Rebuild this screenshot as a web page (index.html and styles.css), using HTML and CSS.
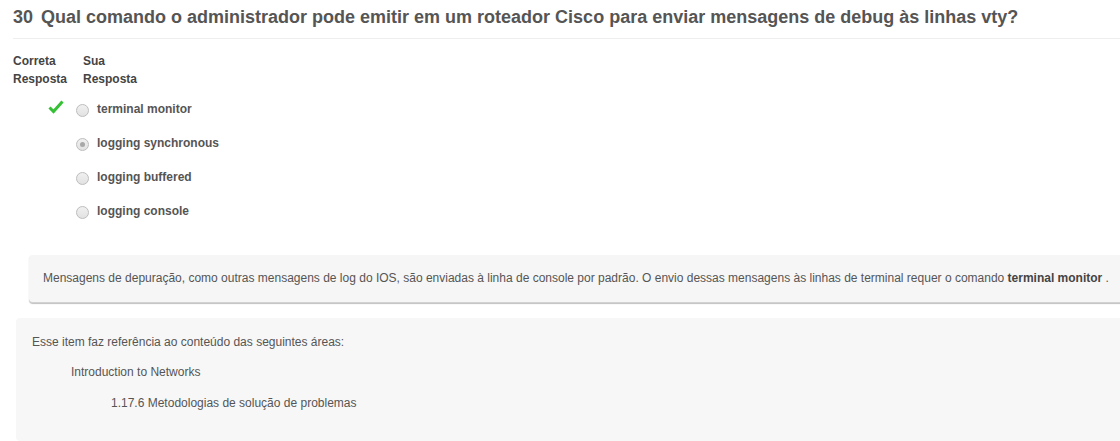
FILE: index.html
```html
<!DOCTYPE html>
<html lang="pt">
<head>
<meta charset="utf-8">
<link rel="stylesheet" href="styles.css">
</head>
<body>
<div class="page">
  <h2 class="question"><span class="qnum">30</span>Qual comando o administrador pode emitir em um roteador Cisco para enviar mensagens de debug às linhas vty?</h2>
  <div class="answers">
    <div class="heads">
      <div class="head h1">Correta<br>Resposta</div>
      <div class="head h2">Sua<br>Resposta</div>
    </div>
    <ul class="options">
      <li class="opt"><span class="mark"><svg width="16" height="14" viewBox="0 0 16 14"><path d="M1.5 7.5 L5.5 11.5 L14.5 1.5" fill="none" stroke="#35c035" stroke-width="3" stroke-linejoin="miter"/></svg></span><span class="radio"></span><span class="label">terminal monitor</span></li>
      <li class="opt"><span class="mark"></span><span class="radio checked"></span><span class="label">logging synchronous</span></li>
      <li class="opt"><span class="mark"></span><span class="radio"></span><span class="label">logging buffered</span></li>
      <li class="opt"><span class="mark"></span><span class="radio"></span><span class="label">logging console</span></li>
    </ul>
  </div>
  <div class="explain">Mensagens de depuração, como outras mensagens de log do IOS, são enviadas à linha de console por padrão. O envio dessas mensagens às linhas de terminal requer o comando <b>terminal monitor</b> .</div>
  <div class="refs">
    <p class="r0">Esse item faz referência ao conteúdo das seguintes áreas:</p>
    <p class="r1">Introduction to Networks</p>
    <p class="r2">1.17.6 Metodologias de solução de problemas</p>
  </div>
</div>
</body>
</html>
```

FILE: styles.css
```css
html, body {
  margin: 0;
  padding: 0;
  background: #fff;
  overflow: hidden;
}
body {
  font-family: "Liberation Sans", Arial, sans-serif;
  color: #555;
  width: 1120px;
}
.page {
  width: 1140px;
  padding-left: 13px;
}
.question {
  margin: 0;
  padding: 6px 0 10px;
  font-size: 18px;
  font-weight: bold;
  color: #555;
  line-height: 22px;
  border-bottom: 1px solid #eee;
  white-space: nowrap;
}
.qnum {
  margin-right: 8px;
}
.answers {
  padding-top: 13px;
}
.heads {
  display: flex;
  font-size: 12px;
  font-weight: bold;
  line-height: 18px;
  color: #444;
}
.h1 { width: 70px; }
.options {
  list-style: none;
  margin: 4px 0 0;
  padding: 0;
}
.opt {
  display: flex;
  align-items: center;
  height: 34px;
  font-size: 12px;
  font-weight: bold;
  color: #555;
}
.mark {
  width: 63px;
  display: flex;
  justify-content: flex-end;
}
.mark svg { margin-right: 12px; margin-top: -4px; }
.radio {
  width: 11px;
  height: 11px;
  border-radius: 50%;
  border: 1px solid #bdbdbd;
  background: linear-gradient(#f0f0f0, #e2e2e2);
  margin-right: 8px;
  position: relative;
  margin-top: 3px;
}
.radio.checked::after {
  content: "";
  position: absolute;
  left: 3px;
  top: 3px;
  width: 5px;
  height: 5px;
  border-radius: 50%;
  background: #a8a8a8;
}
.explain {
  margin: 27px 0 0 16px;
  background: #f6f6f6;
  border-radius: 4px;
  box-shadow: 0 1px 1px rgba(0,0,0,0.25);
  border-bottom: 1px solid #d2d2d2;
  padding: 16px 14px 16px;
  font-size: 12px;
  line-height: 15px;
  color: #555;
}
.explain b { color: #444; }
.refs {
  margin: 15px 0 0 3px;
  background: #f7f7f7;
  border-radius: 4px;
  padding: 17px 16px 30px;
  font-size: 12px;
  color: #555;
  line-height: 15px;
}
.refs p { margin: 0; }
.r1 { padding: 15px 0 0 39px; }
.r2 { padding: 16px 0 0 79px; }
```
